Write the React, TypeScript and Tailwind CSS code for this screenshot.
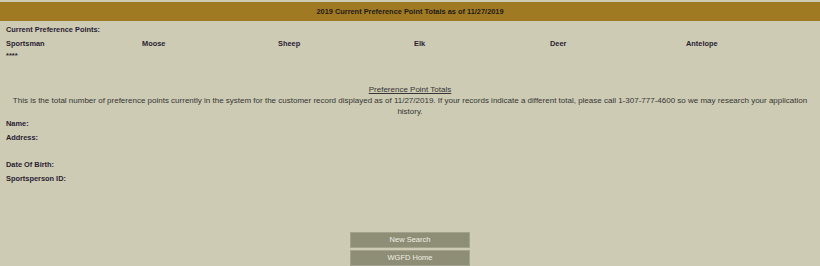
export default function App() {
  const species = ["Sportsman", "Moose", "Sheep", "Elk", "Deer", "Antelope"];

  return (
    <div className="min-h-screen w-full bg-[#cdcbb3] pt-[2px] font-['Liberation_Sans',Arial,sans-serif] text-[7.4px] text-[#2a1d33]">
      <div className="flex h-[19px] items-center justify-center bg-[#a07a22] font-bold text-[#1f1a1a]">
        2019 Current Preference Point Totals as of 11/27/2019
      </div>

      <div className="pl-[6px] pt-[2px]">
        <div className="flex h-[14px] items-center font-bold">Current Preference Points:</div>
        <div className="grid h-[14px] grid-cols-[repeat(6,136px)] items-center font-bold">
          {species.map((s) => (
            <div key={s}>{s}</div>
          ))}
        </div>
        <div className="flex h-[10px] items-center text-[7.4px] font-bold leading-none">****</div>
      </div>

      <div className="mt-[23px] px-[10px] text-center text-[8px] leading-[11px] text-[#363636]">
        <div className="underline">Preference Point Totals</div>
        <p>
          This is the total number of preference points currently in the system for the customer record displayed as of
          11/27/2019. If your records indicate a different total, please call 1-307-777-4600 so we may research your
          application history.
        </p>
      </div>

      <div className="pl-[6px] font-bold">
        <div className="flex h-[14px] items-center">Name:</div>
        <div className="flex h-[14px] items-center">Address:</div>
        <div className="h-[13px]" />
        <div className="flex h-[14px] items-center">Date Of Birth:</div>
        <div className="flex h-[14px] items-center">Sportsperson ID:</div>
      </div>

      <div className="mt-[47px] flex flex-col items-center gap-[4px]">
        <button className="h-[14px] w-[118px] bg-[#8e8d76] text-[7.5px] leading-none text-[#efefe4] shadow-[0_0_0_1px_#a3a28c]">
          New Search
        </button>
        <button className="h-[14px] w-[118px] bg-[#8e8d76] text-[7.5px] leading-none text-[#efefe4] shadow-[0_0_0_1px_#a3a28c]">
          WGFD Home
        </button>
      </div>
    </div>
  );
}
